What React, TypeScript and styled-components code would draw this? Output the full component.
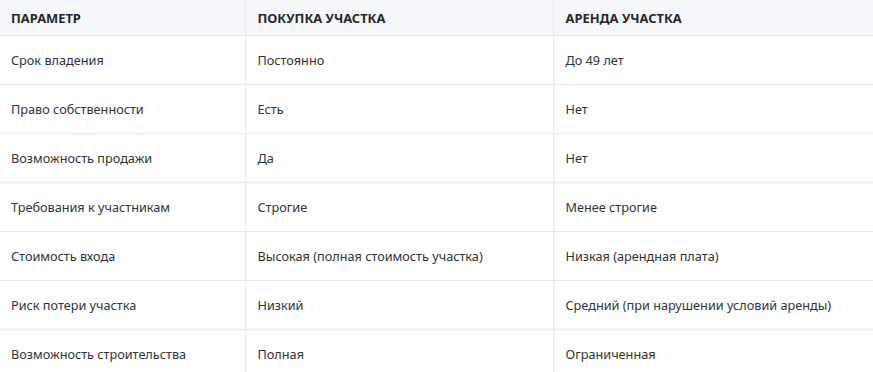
import React from "react";
import styled, { createGlobalStyle } from "styled-components";

const Global = createGlobalStyle`
  html, body { margin: 0; padding: 0; background: #ffffff; }
  body { font-family: "Noto Sans", "Open Sans", sans-serif; overflow: hidden; }
`;

const Table = styled.table`
  width: 873px;
  border-collapse: collapse;
  table-layout: fixed;
  font-size: 12.7px;
  color: #2f3337;
`;

const Col = styled.col<{ $w: number }>`
  width: ${(p) => p.$w}px;
`;

const HeadCell = styled.th`
  height: 35px;
  padding: 0 12px;
  text-align: left;
  font-weight: 700;
  font-size: 12.9px;
  color: #24272b;
  background: #f6f7fa;
  border-bottom: 1px solid #e3e5ea;
  border-left: 1px solid #e8eaee;
  &:first-child { border-left: none; padding-left: 11px; }
`;

const Cell = styled.td`
  height: 48px;
  padding: 0 12px;
  border-bottom: 1px solid #e8eaee;
  border-left: 1px solid #e8eaee;
  &:first-child { border-left: none; padding-left: 11px; }
`;

const rows: [string, string, string][] = [
  ["Срок владения", "Постоянно", "До 49 лет"],
  ["Право собственности", "Есть", "Нет"],
  ["Возможность продажи", "Да", "Нет"],
  ["Требования к участникам", "Строгие", "Менее строгие"],
  ["Стоимость входа", "Высокая (полная стоимость участка)", "Низкая (арендная плата)"],
  ["Риск потери участка", "Низкий", "Средний (при нарушении условий аренды)"],
  ["Возможность строительства", "Полная", "Ограниченная"],
];

export default function App() {
  return (
    <>
      <Global />
      <Table>
        <colgroup>
          <Col $w={245} />
          <Col $w={308} />
          <Col $w={320} />
        </colgroup>
        <thead>
          <tr>
            <HeadCell>ПАРАМЕТР</HeadCell>
            <HeadCell>ПОКУПКА УЧАСТКА</HeadCell>
            <HeadCell>АРЕНДА УЧАСТКА</HeadCell>
          </tr>
        </thead>
        <tbody>
          {rows.map((r) => (
            <tr key={r[0]}>
              {r.map((c, i) => (
                <Cell key={i}>{c}</Cell>
              ))}
            </tr>
          ))}
        </tbody>
      </Table>
    </>
  );
}
